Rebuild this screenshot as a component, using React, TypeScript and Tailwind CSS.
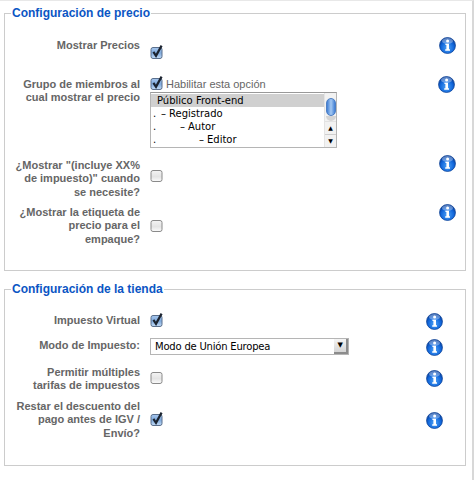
import type { ReactNode } from "react";

function InfoIcon({ id }: { id: string }) {
  return (
    <svg width="17" height="17" viewBox="0 0 17 17" className="block shrink-0">
      <defs>
        <radialGradient id={id} cx="50%" cy="65%" r="60%">
          <stop offset="0%" stopColor="#4fa2f5" />
          <stop offset="65%" stopColor="#1268dc" />
          <stop offset="100%" stopColor="#063f9e" />
        </radialGradient>
      </defs>
      <circle cx="8.5" cy="8.5" r="8" fill={`url(#${id})`} stroke="#0a3f94" strokeWidth="0.7" />
      <ellipse cx="8.5" cy="4" rx="5.5" ry="3" fill="#ffffff" opacity="0.35" />
      <circle cx="8.6" cy="4.1" r="1.5" fill="#ffffff" />
      <path d="M6.4 6.7h3.6v5.6h1v1.4H6.2v-1.4h1.2V8.1h-1z" fill="#ffffff" />
    </svg>
  );
}

function Checkbox({ checked, className = "" }: { checked?: boolean; className?: string }) {
  return (
    <svg width="14" height="15" viewBox="0 0 14 15" className={`block shrink-0 ${className}`}>
      <defs>
        <linearGradient id="aquaOn" x1="0" y1="0" x2="0" y2="1">
          <stop offset="0%" stopColor="#a9c8ee" />
          <stop offset="50%" stopColor="#7ea9dc" />
          <stop offset="100%" stopColor="#c4dcf6" />
        </linearGradient>
        <linearGradient id="aquaOff" x1="0" y1="0" x2="0" y2="1">
          <stop offset="0%" stopColor="#f4f4f4" />
          <stop offset="55%" stopColor="#e4e4e4" />
          <stop offset="100%" stopColor="#fbfbfb" />
        </linearGradient>
      </defs>
      <rect
        x="1"
        y="2.5"
        width="11"
        height="11"
        rx="2"
        fill={checked ? "url(#aquaOn)" : "url(#aquaOff)"}
        stroke={checked ? "#5a6f8c" : "#8a8a8a"}
      />
      {checked && <path d="M3.4 6.8l2.6 4L11.6 0.6" fill="none" stroke="#1c2430" strokeWidth="2.2" />}
    </svg>
  );
}

function Label({ children, className = "" }: { children: ReactNode; className?: string }) {
  return (
    <div className={`w-[135px] shrink-0 text-right text-[11px] leading-[13.4px] font-bold text-[#666] ${className}`}>
      {children}
    </div>
  );
}

function ListBox() {
  return (
    <div className="mt-[1px] flex h-[56px] w-[187px] border border-[#b5b5b5] border-t-[#999] font-['DejaVu_Sans',sans-serif] text-[10px] leading-[13px] text-black">
      <div className="flex-1 overflow-hidden">
        <div className="mt-[1px] h-[13px] bg-[#d0d0d0] pl-[6px]">Público Front-end</div>
        <div className="flex h-[13px] pl-[2px]">
          <span className="w-[8px]">.</span>–<span className="ml-[3px]">Registrado</span>
        </div>
        <div className="flex h-[13px] pl-[2px]">
          <span className="w-[27px]">.</span>–<span className="ml-[3px]">Autor</span>
        </div>
        <div className="flex h-[13px] pl-[2px]">
          <span className="w-[46px]">.</span>–<span className="ml-[3px]">Editor</span>
        </div>
      </div>
      <div className="flex w-[12px] flex-col items-center border-l border-[#e4e4e4] bg-[#f2f2f2]">
        <div className="mt-[5px] h-[18px] w-[10px] rounded-[5px] border border-[#4d7fc4] bg-gradient-to-r from-[#3f7ed4] via-[#a5c9f2] to-[#3f7ed4]" />
        <div className="h-[5px] w-[10px] rounded-b-[5px] bg-[#d4d4d4]" />
        <div className="mt-auto flex h-[13px] w-full items-center justify-center border-t border-[#e2e2e2] text-[6px] leading-none">▲</div>
        <div className="flex h-[13px] w-full items-center justify-center border-t border-[#cfcfcf] text-[6px] leading-none">▼</div>
      </div>
    </div>
  );
}

function SelectBox() {
  return (
    <div className="mt-[-1px] flex h-[17px] w-[199px] items-center border border-[#b5b5b5] pl-[4px] font-['DejaVu_Sans',sans-serif] text-[10px] tracking-[-0.2px] text-black">
      <span className="flex-1">Modo de Unión Europea</span>
      <div className="flex h-[15px] w-[14px] items-center justify-center border-r-2 border-b-2 border-[#8c8c8c] bg-gradient-to-b from-[#f5f5f5] to-[#d4d4d4] text-[7px] leading-none">
        ▼
      </div>
    </div>
  );
}

function Legend({ children }: { children: ReactNode }) {
  return (
    <legend className="ml-[6px] px-[1px] text-[12px] leading-[14px] font-bold text-[#0b55c4]">{children}</legend>
  );
}

export default function App() {
  return (
    <div className="h-[480px] w-[474px] overflow-hidden border-t border-r-2 border-t-[#e8e8e8] border-r-[#d8d8d8] bg-white pt-[5px] pl-[4px] font-['Liberation_Sans',sans-serif]">
      <fieldset className="h-[265px] w-[462px] border border-[#ccc]">
        <Legend>Configuración de precio</Legend>

        <div className="mt-[19px] flex h-[39px]">
          <Label>Mostrar Precios</Label>
          <Checkbox checked className="mt-[6px] ml-[10px]" />
          <div className="mt-[-2px] ml-[275px]">
            <InfoIcon id="info1" />
          </div>
        </div>

        <div className="flex h-[81px]">
          <Label>
            Grupo de miembros al
            <br />
            cual mostrar el precio
          </Label>
          <div className="ml-[10px]">
            <div className="flex h-[13px] items-center text-[11px] text-[#666]">
              <Checkbox checked className="mt-[-3px]" />
              <span className="ml-[2px]">Habilitar esta opción</span>
            </div>
            <ListBox />
          </div>
          <div className="mt-[-2px] ml-[101px]">
            <InfoIcon id="info2" />
          </div>
        </div>

        <div className="flex h-[47px]">
          <Label>
            ¿Mostrar "(incluye XX%
            <br />
            de impuesto)" cuando
            <br />
            se necesite?
          </Label>
          <Checkbox className="mt-[9px] ml-[10px]" />
          <div className="mt-[-4px] ml-[275px]">
            <InfoIcon id="info3" />
          </div>
        </div>

        <div className="flex h-[48px]">
          <Label>
            ¿Mostrar la etiqueta de
            <br />
            precio para el
            <br />
            empaque?
          </Label>
          <Checkbox className="mt-[12px] ml-[10px]" />
          <div className="mt-[-2px] ml-[275px]">
            <InfoIcon id="info4" />
          </div>
        </div>
      </fieldset>

      <fieldset className="mt-[11px] h-[184px] w-[462px] border border-[#ccc]">
        <Legend>Configuración de la tienda</Legend>

        <div className="mt-[18px] flex h-[25px]">
          <Label>Impuesto Virtual</Label>
          <Checkbox checked className="mt-[-1px] ml-[10px]" />
          <div className="mt-[-1px] ml-[262px]">
            <InfoIcon id="info5" />
          </div>
        </div>

        <div className="flex h-[27px]">
          <Label>Modo de Impuesto:</Label>
          <div className="ml-[10px]">
            <SelectBox />
          </div>
          <div className="ml-[77px]">
            <InfoIcon id="info6" />
          </div>
        </div>

        <div className="flex h-[34px]">
          <Label>
            Permitir múltiples
            <br />
            tarifas de impuestos
          </Label>
          <Checkbox className="mt-[4px] ml-[10px]" />
          <div className="mt-[4px] ml-[262px]">
            <InfoIcon id="info7" />
          </div>
        </div>

        <div className="flex">
          <Label>
            Restar el descuento del
            <br />
            pago antes de IGV /
            <br />
            Envío?
          </Label>
          <Checkbox checked className="mt-[12px] ml-[10px]" />
          <div className="mt-[12px] ml-[262px]">
            <InfoIcon id="info8" />
          </div>
        </div>
      </fieldset>
    </div>
  );
}
